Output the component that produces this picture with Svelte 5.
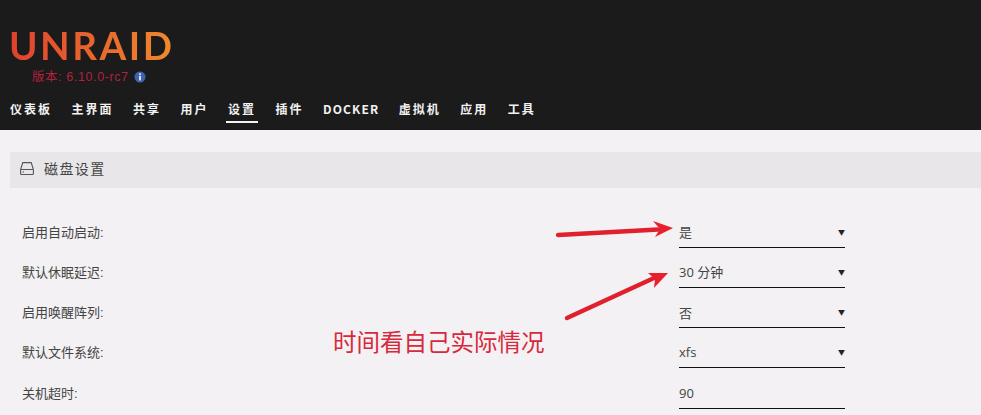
<script>
  const nav = ['仪表板', '主界面', '共享', '用户', '设置', '插件', 'DOCKER', '虚拟机', '应用', '工具'];
  const active = '设置';
  const rows = [
    { label: '启用自动启动:', value: '是', select: true },
    { label: '默认休眠延迟:', value: '30 分钟', select: true },
    { label: '启用唤醒阵列:', value: '否', select: true },
    { label: '默认文件系统:', value: 'xfs', select: true },
    { label: '关机超时:', value: '90', select: false }
  ];
</script>

<div class="page">
  <header class="header">
    <div class="logo">UNRAID</div>
    <div class="version">
      <span>版本: 6.10.0-rc7</span>
      <svg class="info" viewBox="0 0 12 12" width="12" height="12" aria-hidden="true">
        <circle cx="6" cy="6" r="5.5" fill="#3f63b0" />
        <rect x="5.1" y="2.3" width="1.8" height="1.6" fill="#e6e9f2" />
        <rect x="5.1" y="4.8" width="1.8" height="4.6" fill="#e6e9f2" />
      </svg>
    </div>
    <nav class="nav">
      {#each nav as item}
        <span class="nav-item" class:active={item === active} class:latin={item === 'DOCKER'}>{item}</span>
      {/each}
    </nav>
  </header>

  <main class="content">
    <div class="title-bar">
      <svg class="disk" viewBox="0 0 14 13" width="14" height="13" fill="none" stroke="#555" stroke-width="1.1" aria-hidden="true">
        <path d="M.6 7.5 2.8.6h8.4l2.2 6.9" />
        <rect x=".6" y="7.5" width="12.8" height="5" rx="0.8" />
        <path d="M2.5 10h1.5" />
      </svg>
      <span>磁盘设置</span>
    </div>

    <div class="form">
      {#each rows as row}
        <div class="row">
          <span class="label">{row.label}</span>
          <div class="field">
            <span>{row.value}</span>
            {#if row.select}<span class="caret">▼</span>{/if}
          </div>
        </div>
      {/each}
    </div>
  </main>

  <svg class="arrows" width="981" height="415" viewBox="0 0 981 415" aria-hidden="true">
    <path d="M558 235 L658 229.5" stroke="#e0202c" stroke-width="4.4" stroke-linecap="round" fill="none" />
    <path d="M653 221 L673 228 L655 237 L660 229 Z" fill="#e8202c" />
    <path d="M567 318 L654 278" stroke="#e0202c" stroke-width="4.4" stroke-linecap="round" fill="none" />
    <path d="M648 273 L668 273 L654 288 L655 279 Z" fill="#e8202c" />
  </svg>
  <div class="note">时间看自己实际情况</div>
</div>

<style>
  :global(body) {
    margin: 0;
    background: #f3f1f3;
  }

  .page {
    position: relative;
    width: 981px;
    height: 415px;
    overflow: hidden;
    font-family: "Liberation Sans", "Noto Sans CJK SC", sans-serif;
  }

  .header {
    height: 130px;
    box-sizing: border-box;
    padding: 27px 0 0 9px;
    background: #1c1b1b;
  }

  .logo {
    width: max-content;
    font-family: Lato, sans-serif;
    font-size: 38.5px;
    font-weight: 700;
    line-height: 36px;
    letter-spacing: 2.5px;
    background: linear-gradient(90deg, #e0402e, #f08a2c);
    -webkit-background-clip: text;
    background-clip: text;
    color: transparent;
  }

  .version {
    display: flex;
    align-items: center;
    gap: 5px;
    margin: 7px 0 0 23px;
    font-size: 12.5px;
    line-height: 14px;
    letter-spacing: 0.6px;
    color: #b0223c;
  }

  .nav {
    display: flex;
    gap: 19.5px;
    margin: 17px 0 0 1px;
    font-family: "Noto Sans CJK SC", sans-serif;
  }

  .nav-item {
    padding-bottom: 4px;
    border-bottom: 2px solid transparent;
    font-size: 12px;
    font-weight: 700;
    line-height: 16px;
    letter-spacing: 2px;
    color: #f2f2f2;
  }

  .nav-item.latin {
    letter-spacing: 1.1px;
  }

  .nav-item.active {
    margin: 0 -2px;
    padding: 0 2px 4px;
    border-bottom-color: #f2f2f2;
  }

  .content {
    padding: 22px 0 0 10px;
  }

  .title-bar {
    display: flex;
    align-items: center;
    gap: 10px;
    height: 32px;
    padding: 0 0 4px 10px;
    background: #e8e6e8;
    font-size: 14px;
    letter-spacing: 1.4px;
    color: #444;
  }

  .form {
    padding: 23.5px 136px 0 12px;
  }

  .row {
    display: flex;
    justify-content: space-between;
    height: 40.25px;
    font-size: 13px;
    color: #444;
  }

  .label {
    line-height: 41px;
  }

  .field {
    display: flex;
    justify-content: space-between;
    align-items: center;
    width: 166px;
    height: 36px;
    padding-top: 5px;
    box-sizing: border-box;
    border-bottom: 1px solid #111;
    font-family: "Open Sans", "Noto Sans CJK SC", sans-serif;
  }

  .caret {
    font-size: 7px;
    color: #222;
  }

  .arrows {
    position: absolute;
    top: 0;
    left: 0;
    pointer-events: none;
  }

  .note {
    position: absolute;
    top: 328px;
    left: 333px;
    font-size: 23.5px;
    line-height: 30px;
    color: #d9283c;
  }
</style>
